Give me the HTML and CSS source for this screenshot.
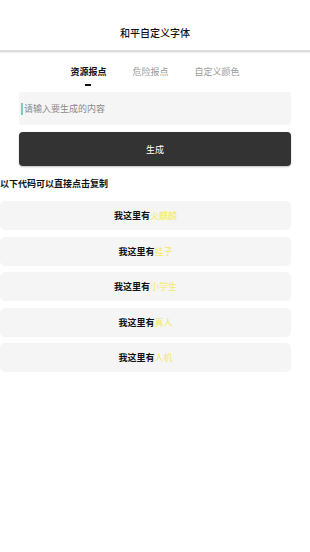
FILE: index.html
```html
<!DOCTYPE html>
<html lang="zh">
<head>
<meta charset="utf-8">
<title>和平自定义字体</title>
<link rel="stylesheet" href="styles.css">
</head>
<body>
<div class="page">
  <header class="topbar">和平自定义字体</header>
  <nav class="tabs">
    <div class="tab active">资源报点<span class="bar"></span></div>
    <div class="tab">危险报点</div>
    <div class="tab">自定义颜色</div>
  </nav>
  <div class="form">
    <div class="input"><span class="caret"></span><span class="ph">请输入要生成的内容</span></div>
    <div class="btn">生成</div>
  </div>
  <div class="hint">以下代码可以直接点击复制</div>
  <div class="list">
    <div class="item">我这里有<span class="hl">火麒麟</span></div>
    <div class="item">我这里有<span class="hl">挂子</span></div>
    <div class="item">我这里有<span class="hl">小学生</span></div>
    <div class="item">我这里有<span class="hl">真人</span></div>
    <div class="item">我这里有<span class="hl">人机</span></div>
  </div>
</div>
</body>
</html>
```

FILE: styles.css
```css
* { box-sizing: border-box; }
html, body { margin: 0; padding: 0; background: #fff; }
body {
  font-family: "Noto Sans CJK SC", "Noto Sans", sans-serif;
  color: #111;
  width: 310px;
  height: 552px;
  overflow: hidden;
}
.page { display: flex; flex-direction: column; }
.topbar {
  height: 52px;
  padding-top: 26px;
  text-align: center;
  font-size: 10px;
  line-height: 14px;
  font-weight: 500;
  border-bottom: 2px solid #dedede;
  box-shadow: 0 1px 1px rgba(0,0,0,0.06);
}
.tabs {
  display: flex;
  justify-content: center;
  gap: 26px;
  padding-top: 14px;
  height: 40px;
}
.tab {
  position: relative;
  font-size: 9px;
  line-height: 12px;
  color: #9a9a9a;
}
.tab.active { color: #111; font-weight: 700; }
.tab .bar {
  position: absolute;
  left: 15px;
  top: 18px;
  width: 6px;
  height: 2px;
  background: #111;
}
.form {
  padding: 0 19px;
  display: flex;
  flex-direction: column;
  gap: 7px;
}
.input {
  height: 33px;
  background: #f5f5f5;
  border-radius: 3px;
  display: flex;
  align-items: center;
  padding-left: 2px;
}
.caret {
  width: 2px;
  height: 12px;
  background: #7fc9c0;
  margin-right: 1px;
}
.ph { font-size: 9px; color: #8a8a8a; }
.btn {
  height: 34px;
  background: #333333;
  border-radius: 4px;
  color: #fff;
  font-size: 9px;
  display: flex;
  align-items: center;
  justify-content: center;
  box-shadow: 0 1px 2px rgba(0,0,0,0.25);
}
.hint {
  margin-top: 12px;
  font-size: 9px;
  font-weight: 700;
  line-height: 12px;
}
.list {
  margin-top: 11px;
  width: 291px;
  display: flex;
  flex-direction: column;
  gap: 6.5px;
}
.item {
  height: 29px;
  background: #f5f5f5;
  border-radius: 5px;
  display: flex;
  align-items: center;
  justify-content: center;
  font-size: 9px;
  font-weight: 700;
  color: #111;
}
.hl { color: #f3ea63; font-weight: 400; }
```
